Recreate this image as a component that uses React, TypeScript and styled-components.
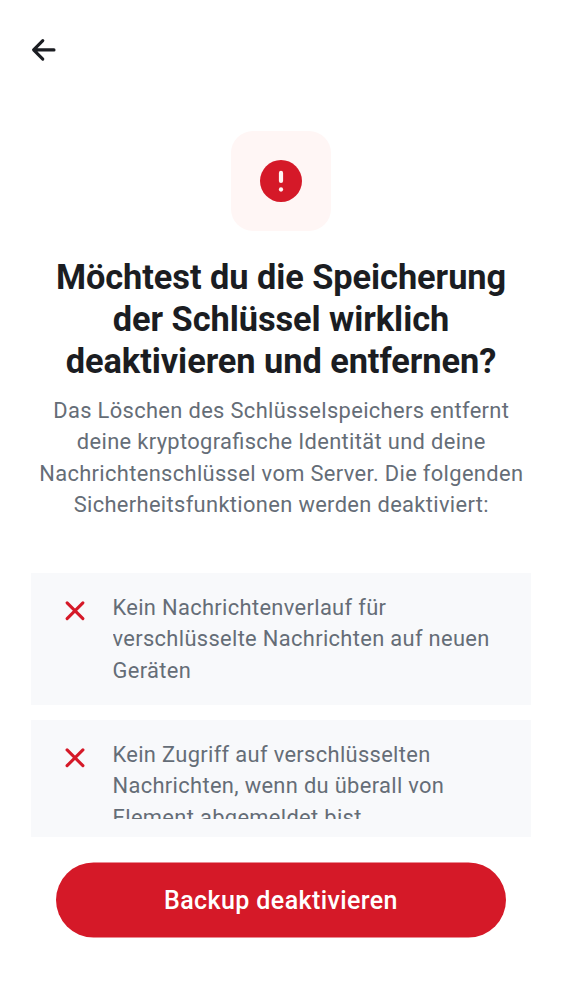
import React from 'react';
import styled, { createGlobalStyle } from 'styled-components';

const GlobalStyle = createGlobalStyle`
  * { box-sizing: border-box; }
  body { margin: 0; background: #fff; font-family: Roboto, sans-serif; -webkit-font-smoothing: antialiased; }
`;

const Screen = styled.main`
  display: flex;
  flex-direction: column;
  height: 1000px;
  width: 562px;
  overflow: hidden;
  background: #fff;
`;

const TopBar = styled.header`
  display: flex;
  align-items: center;
  height: 100px;
  padding-left: 29px;
`;

const BackButton = styled.button`
  display: flex;
  padding: 0;
  border: 0;
  background: none;
  color: #1b1d22;
`;

const Content = styled.section`
  display: flex;
  flex-direction: column;
  align-items: center;
  height: 737px;
  padding: 31px 31px 0;
  overflow: hidden;
`;

const AlertTile = styled.div`
  display: flex;
  flex: none;
  align-items: center;
  justify-content: center;
  width: 100px;
  height: 100px;
  border-radius: 22px;
  background: #fff6f5;
`;

const Title = styled.h1`
  margin: 25px 0 0;
  color: #1b1d22;
  font-size: 34.375px;
  font-weight: 700;
  line-height: 42px;
  letter-spacing: -0.06px;
  text-align: center;
  white-space: nowrap;
`;

const Description = styled.p`
  margin: 13px 0 0;
  padding-left: 0.6px;
  color: #656d77;
  font-size: 21.875px;
  line-height: 31.25px;
  letter-spacing: 0.35px;
  font-feature-settings: 'liga' 1;
  text-align: center;
  white-space: nowrap;
`;

const List = styled.ul`
  display: flex;
  flex-direction: column;
  flex: none;
  gap: 15px;
  width: 100%;
  margin: 53px 0 0;
  padding: 0;
  list-style: none;
`;

const Item = styled.li<{ $clipped?: boolean }>`
  display: flex;
  height: ${({ $clipped }) => ($clipped ? 117 : 132)}px;
  padding: 19px 31px ${({ $clipped }) => ($clipped ? 18 : 19)}px;
  gap: 24.5px;
  background: #f8f9fb;
`;

const Cross = styled.svg`
  flex: none;
  width: 26px;
  height: 26px;
  margin-top: 6px;
`;

const ItemText = styled.div`
  overflow: hidden;
  color: #656d77;
  font-size: 21.875px;
  line-height: 31.25px;
  letter-spacing: 0.34px;
  white-space: nowrap;
`;

const Footer = styled.footer`
  padding: 26px 56px 0;
`;

const DangerButton = styled.button`
  display: block;
  width: 100%;
  height: 75px;
  padding: 0;
  border: 0;
  border-radius: 38px;
  background: #d51928;
  color: #fff;
  font: 500 25px/38px Roboto, sans-serif;
  letter-spacing: 0.4px;
  transform: translateY(-0.5px);
`;

const losses = [
  ['Kein Nachrichtenverlauf für', 'verschlüsselte Nachrichten auf neuen', 'Geräten'],
  ['Kein Zugriff auf verschlüsselten', 'Nachrichten, wenn du überall von', 'Element abgemeldet bist'],
];

const Lines = ({ lines }: { lines: string[] }) => (
  <>
    {lines.map((line, i) => (
      <React.Fragment key={line}>
        {i > 0 && <br />}
        {line}
      </React.Fragment>
    ))}
  </>
);

export default function App() {
  return (
    <Screen>
      <GlobalStyle />
      <TopBar>
        <BackButton aria-label="Zurück">
          <svg width="30" height="30" viewBox="0 0 30 30" fill="none" stroke="currentColor" strokeWidth="3.1" strokeLinecap="round" strokeLinejoin="round">
            <path d="M13.800 5.600 4.600 14.900l9.200 9.300M5 14.900h20" />
          </svg>
        </BackButton>
      </TopBar>
      <Content>
        <AlertTile>
          <svg width="42" height="42" viewBox="0 0 42 42">
            <circle cx="21" cy="21" r="21" fill="#d51928" />
            <path d="M21 12.900v8" stroke="#fff6f5" strokeWidth="4.200" strokeLinecap="round" />
            <circle cx="21" cy="29.500" r="2.150" fill="#fff6f5" />
          </svg>
        </AlertTile>
        <Title>
          <Lines lines={['Möchtest du die Speicherung', 'der Schlüssel wirklich', 'deaktivieren und entfernen?']} />
        </Title>
        <Description>
          <Lines
            lines={[
              'Das Löschen des Schlüsselspeichers entfernt',
              'deine kryptografische Identität und deine',
              'Nachrichtenschlüssel vom Server. Die folgenden',
              'Sicherheitsfunktionen werden deaktiviert:',
            ]}
          />
        </Description>
        <List>
          {losses.map((lines, i) => (
            <Item key={lines[0]} $clipped={i === 1}>
              <Cross viewBox="0 0 26 26" fill="none" stroke="#d51928" strokeWidth="3.100" strokeLinecap="round">
                <path d="m5.100 4.900 15.800 15.800M20.900 4.900 5.100 20.700" />
              </Cross>
              <ItemText>
                <Lines lines={lines} />
              </ItemText>
            </Item>
          ))}
        </List>
      </Content>
      <Footer>
        <DangerButton>Backup deaktivieren</DangerButton>
      </Footer>
    </Screen>
  );
}
